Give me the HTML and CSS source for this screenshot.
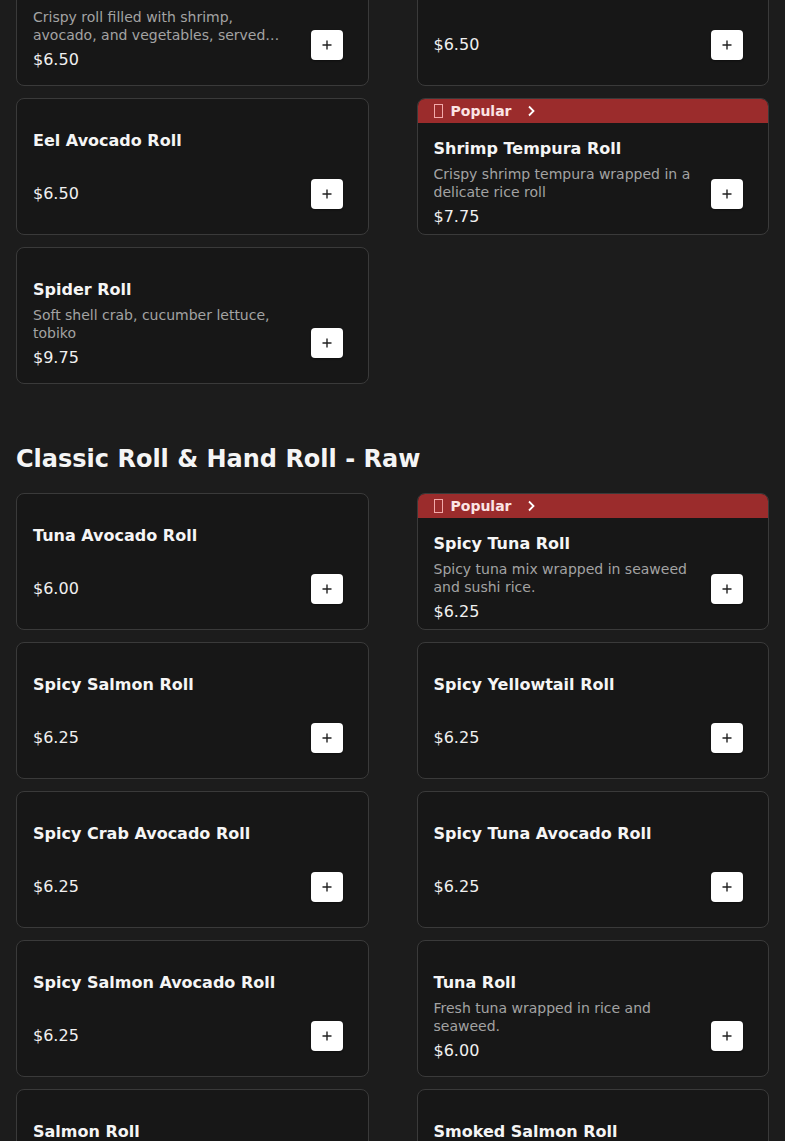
FILE: index.html
```html
<!DOCTYPE html>
<html lang="en">
<head>
<meta charset="utf-8">
<title>Menu</title>
<link rel="stylesheet" href="styles.css">
</head>
<body>
<main class="menu">
  <section class="section">
    <div class="grid">
      <article class="card">
        <div class="body">
          <div class="info">
            <h3 class="title">Shrimp Crunch Roll</h3>
            <p class="desc">Crispy roll filled with shrimp, avocado, and vegetables, served with eel sauce and spicy mayo</p>
            <p class="price">$6.50</p>
          </div>
          <button class="add" aria-label="Add"><svg viewBox="0 0 12 12" width="12" height="12"><path d="M6 1.5v9M1.5 6h9" stroke="#222" stroke-width="1.4" fill="none"/></svg></button>
        </div>
      </article>
      <article class="card">
        <div class="body">
          <div class="info">
            <h3 class="title">Salmon Avocado Roll</h3>
            <p class="price price-solo">$6.50</p>
          </div>
          <button class="add" aria-label="Add"><svg viewBox="0 0 12 12" width="12" height="12"><path d="M6 1.5v9M1.5 6h9" stroke="#222" stroke-width="1.4" fill="none"/></svg></button>
        </div>
      </article>
      <article class="card">
        <div class="body">
          <div class="info">
            <h3 class="title">Eel Avocado Roll</h3>
            <p class="price price-solo">$6.50</p>
          </div>
          <button class="add" aria-label="Add"><svg viewBox="0 0 12 12" width="12" height="12"><path d="M6 1.5v9M1.5 6h9" stroke="#222" stroke-width="1.4" fill="none"/></svg></button>
        </div>
      </article>
      <article class="card card-popular">
        <div class="badge"><span class="tofu"></span><span class="badge-text">Popular</span><svg class="chev" viewBox="0 0 10 12" width="10" height="12"><path d="M3 1.5l4.5 4.5L3 10.5" stroke="#fff" stroke-width="1.8" fill="none"/></svg></div>
        <div class="body">
          <div class="info">
            <h3 class="title">Shrimp Tempura Roll</h3>
            <p class="desc">Crispy shrimp tempura wrapped in a delicate rice roll</p>
            <p class="price">$7.75</p>
          </div>
          <button class="add" aria-label="Add"><svg viewBox="0 0 12 12" width="12" height="12"><path d="M6 1.5v9M1.5 6h9" stroke="#222" stroke-width="1.4" fill="none"/></svg></button>
        </div>
      </article>
      <article class="card">
        <div class="body">
          <div class="info">
            <h3 class="title">Spider Roll</h3>
            <p class="desc">Soft shell crab, cucumber lettuce, tobiko</p>
            <p class="price">$9.75</p>
          </div>
          <button class="add" aria-label="Add"><svg viewBox="0 0 12 12" width="12" height="12"><path d="M6 1.5v9M1.5 6h9" stroke="#222" stroke-width="1.4" fill="none"/></svg></button>
        </div>
      </article>
    </div>
  </section>

  <section class="section">
    <h2 class="section-title">Classic Roll &amp; Hand Roll - Raw</h2>
    <div class="grid">
      <article class="card">
        <div class="body">
          <div class="info">
            <h3 class="title">Tuna Avocado Roll</h3>
            <p class="price price-solo">$6.00</p>
          </div>
          <button class="add" aria-label="Add"><svg viewBox="0 0 12 12" width="12" height="12"><path d="M6 1.5v9M1.5 6h9" stroke="#222" stroke-width="1.4" fill="none"/></svg></button>
        </div>
      </article>
      <article class="card card-popular">
        <div class="badge"><span class="tofu"></span><span class="badge-text">Popular</span><svg class="chev" viewBox="0 0 10 12" width="10" height="12"><path d="M3 1.5l4.5 4.5L3 10.5" stroke="#fff" stroke-width="1.8" fill="none"/></svg></div>
        <div class="body">
          <div class="info">
            <h3 class="title">Spicy Tuna Roll</h3>
            <p class="desc">Spicy tuna mix wrapped in seaweed and sushi rice.</p>
            <p class="price">$6.25</p>
          </div>
          <button class="add" aria-label="Add"><svg viewBox="0 0 12 12" width="12" height="12"><path d="M6 1.5v9M1.5 6h9" stroke="#222" stroke-width="1.4" fill="none"/></svg></button>
        </div>
      </article>
      <article class="card">
        <div class="body">
          <div class="info">
            <h3 class="title">Spicy Salmon Roll</h3>
            <p class="price price-solo">$6.25</p>
          </div>
          <button class="add" aria-label="Add"><svg viewBox="0 0 12 12" width="12" height="12"><path d="M6 1.5v9M1.5 6h9" stroke="#222" stroke-width="1.4" fill="none"/></svg></button>
        </div>
      </article>
      <article class="card">
        <div class="body">
          <div class="info">
            <h3 class="title">Spicy Yellowtail Roll</h3>
            <p class="price price-solo">$6.25</p>
          </div>
          <button class="add" aria-label="Add"><svg viewBox="0 0 12 12" width="12" height="12"><path d="M6 1.5v9M1.5 6h9" stroke="#222" stroke-width="1.4" fill="none"/></svg></button>
        </div>
      </article>
      <article class="card">
        <div class="body">
          <div class="info">
            <h3 class="title">Spicy Crab Avocado Roll</h3>
            <p class="price price-solo">$6.25</p>
          </div>
          <button class="add" aria-label="Add"><svg viewBox="0 0 12 12" width="12" height="12"><path d="M6 1.5v9M1.5 6h9" stroke="#222" stroke-width="1.4" fill="none"/></svg></button>
        </div>
      </article>
      <article class="card">
        <div class="body">
          <div class="info">
            <h3 class="title">Spicy Tuna Avocado Roll</h3>
            <p class="price price-solo">$6.25</p>
          </div>
          <button class="add" aria-label="Add"><svg viewBox="0 0 12 12" width="12" height="12"><path d="M6 1.5v9M1.5 6h9" stroke="#222" stroke-width="1.4" fill="none"/></svg></button>
        </div>
      </article>
      <article class="card">
        <div class="body">
          <div class="info">
            <h3 class="title">Spicy Salmon Avocado Roll</h3>
            <p class="price price-solo">$6.25</p>
          </div>
          <button class="add" aria-label="Add"><svg viewBox="0 0 12 12" width="12" height="12"><path d="M6 1.5v9M1.5 6h9" stroke="#222" stroke-width="1.4" fill="none"/></svg></button>
        </div>
      </article>
      <article class="card">
        <div class="body">
          <div class="info">
            <h3 class="title">Tuna Roll</h3>
            <p class="desc">Fresh tuna wrapped in rice and seaweed.</p>
            <p class="price">$6.00</p>
          </div>
          <button class="add" aria-label="Add"><svg viewBox="0 0 12 12" width="12" height="12"><path d="M6 1.5v9M1.5 6h9" stroke="#222" stroke-width="1.4" fill="none"/></svg></button>
        </div>
      </article>
      <article class="card">
        <div class="body">
          <div class="info">
            <h3 class="title">Salmon Roll</h3>
            <p class="price price-solo">$6.00</p>
          </div>
          <button class="add" aria-label="Add"><svg viewBox="0 0 12 12" width="12" height="12"><path d="M6 1.5v9M1.5 6h9" stroke="#222" stroke-width="1.4" fill="none"/></svg></button>
        </div>
      </article>
      <article class="card">
        <div class="body">
          <div class="info">
            <h3 class="title">Smoked Salmon Roll</h3>
            <p class="price price-solo">$6.50</p>
          </div>
          <button class="add" aria-label="Add"><svg viewBox="0 0 12 12" width="12" height="12"><path d="M6 1.5v9M1.5 6h9" stroke="#222" stroke-width="1.4" fill="none"/></svg></button>
        </div>
      </article>
    </div>
  </section>
</main>
</body>
</html>
```
FILE: styles.css
```css
html, body {
  margin: 0;
  padding: 0;
  background: #1c1c1c;
  color: #f2f2f2;
  font-family: "DejaVu Sans", "Liberation Sans", sans-serif;
}

.menu {
  padding: 0 16px;
  margin-top: -51px;
}

.section + .section {
  margin-top: 57px;
}

.section-title {
  margin: 0 0 16px;
  font-size: 24px;
  line-height: 36px;
  font-weight: 700;
  color: #f5f5f5;
}

.grid {
  display: grid;
  grid-template-columns: 1fr 1fr;
  column-gap: 48px;
  row-gap: 12px;
}

.card {
  display: flex;
  flex-direction: column;
  height: 137px;
  box-sizing: border-box;
  border: 1px solid #3a3a3a;
  border-radius: 8px;
  background: #171717;
  overflow: hidden;
}

.badge {
  height: 24px;
  flex: none;
  display: flex;
  align-items: center;
  padding-left: 16px;
  background: #9b2c2c;
  color: #fbe4e4;
  font-size: 14px;
  font-weight: 700;
}

.tofu {
  width: 7px;
  height: 12px;
  border: 1px solid #f2a9a9;
  margin-right: 8px;
}

.chev {
  margin-left: 14px;
}

.body {
  flex: 1;
  display: flex;
  gap: 20px;
  padding: 32px 25px 25px 16px;
  min-height: 0;
}

.card-popular .body {
  padding-top: 16px;
}

.info {
  flex: 1;
  min-width: 0;
}

.title {
  margin: 0;
  font-size: 16px;
  line-height: 20px;
  font-weight: 700;
  color: #f5f5f5;
}

.desc {
  margin: 7px 0 0;
  font-size: 14px;
  line-height: 17.5px;
  color: #a3a3a3;
  display: -webkit-box;
  -webkit-line-clamp: 2;
  -webkit-box-orient: vertical;
  overflow: hidden;
}

.price {
  margin: 4px 0 0;
  font-size: 16px;
  line-height: 24px;
  color: #f0f0f0;
}

.price-solo {
  margin-top: 31px;
}

.add {
  align-self: flex-end;
  flex: none;
  width: 32px;
  height: 30px;
  padding: 0;
  border: none;
  border-radius: 4px;
  background: #ffffff;
  box-shadow: 0 1px 2px rgba(0, 0, 0, 0.4);
  display: flex;
  align-items: center;
  justify-content: center;
  cursor: pointer;
}
```
